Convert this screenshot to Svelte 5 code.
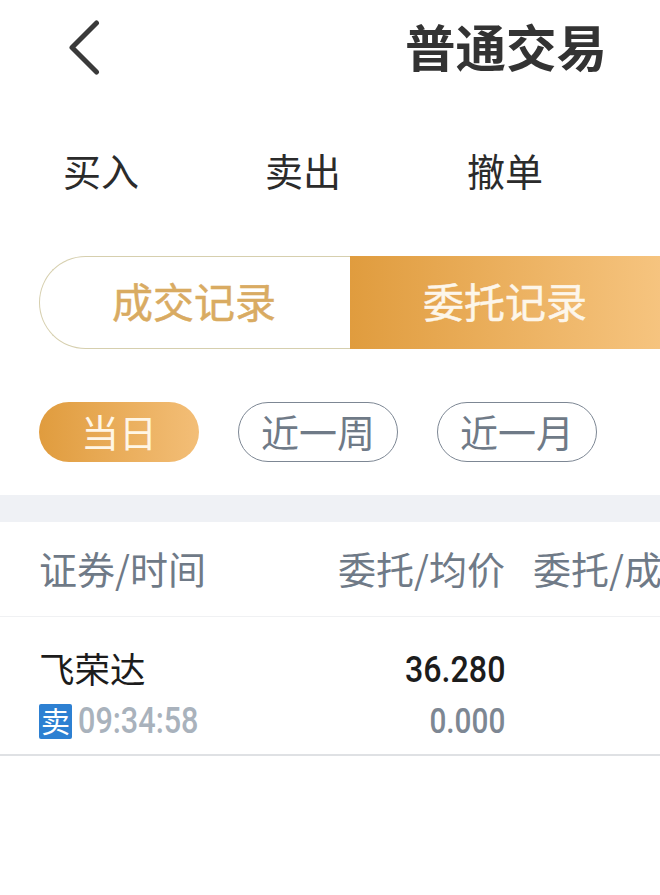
<script>
  const actions = ['买入', '卖出', '撤单'];
  const ranges = ['近一周', '近一月'];
</script>

<div class="page">
  <header class="top">
    <svg class="back" viewBox="0 0 32 56" width="32" height="56" aria-label="返回">
      <path d="M28.5 3 L4 27.5 L28.5 52" fill="none" stroke="#3a3a3a" stroke-width="5" stroke-linecap="round" stroke-linejoin="round" />
    </svg>
    <h1>普通交易</h1>
  </header>

  <nav class="actions">
    {#each actions as a}
      <span>{a}</span>
    {/each}
  </nav>

  <div class="seg">
    <div class="seg-off">成交记录</div>
    <div class="seg-on">委托记录</div>
  </div>

  <div class="pills">
    <span class="pill on">当日</span>
    {#each ranges as r}
      <span class="pill">{r}</span>
    {/each}
  </div>

  <div class="band"></div>

  <div class="thead">
    <span class="c1">证券/时间</span>
    <span class="c2">委托/均价</span>
    <span class="c3">委托/成交</span>
  </div>

  <div class="row">
    <div class="c1 stack">
      <span class="name">飞荣达</span>
      <span class="meta"><b class="tag">卖</b><span class="num time">09:34:58</span></span>
    </div>
    <div class="c2 stack right">
      <span class="num price">36.280</span>
      <span class="num avg">0.000</span>
    </div>
  </div>
</div>

<style>
  :global(body) {
    margin: 0;
    background: #fff;
  }
  .page {
    width: 660px;
    height: 895px;
    overflow: hidden;
    background: #fff;
    font-family: "Noto Sans CJK SC", "Liberation Sans", sans-serif;
  }
  .top {
    height: 97px;
    display: flex;
    align-items: flex-start;
    padding-left: 68px;
    box-sizing: border-box;
  }
  .back {
    margin-top: 20px;
    flex: none;
  }
  h1 {
    margin: 17px 0 0 305px;
    font-size: 50.5px;
    line-height: 56px;
    font-weight: 700;
    color: #333;
    white-space: nowrap;
  }
  .actions {
    height: 159px;
    box-sizing: border-box;
    padding: 51px 0 0 63px;
    display: flex;
    gap: 126px;
    font-size: 38px;
    line-height: 44px;
    color: #2b2b2b;
  }
  .seg {
    margin-left: 39px;
    width: 700px;
    height: 93px;
    display: flex;
    box-sizing: border-box;
  }
  .seg-off, .seg-on {
    display: flex;
    align-items: center;
    font-size: 41px;
    box-sizing: border-box;
    height: 93px;
    padding-bottom: 5px;
    -webkit-text-stroke: 0.5px currentColor;
  }
  .seg-off {
    width: 311px;
    padding-left: 72px;
    color: #d9ab62;
    border: 1px solid #d6cfae;
    border-right: 0;
    border-radius: 46.5px 0 0 46.5px;
  }
  .seg-on {
    width: 389px;
    padding-left: 73px;
    color: #fdf6ea;
    background: linear-gradient(90deg, #e09c3e 0%, #f6c47f 80%);
  }
  .pills {
    margin: 53px 0 0 39px;
    display: flex;
    gap: 39px;
  }
  .pill {
    width: 160px;
    height: 60px;
    box-sizing: border-box;
    display: flex;
    align-items: center;
    justify-content: center;
    border-radius: 30px;
    border: 1px solid #7d8794;
    padding-bottom: 4px;
    color: #6f7a87;
    font-size: 38px;
    white-space: nowrap;
  }
  .pill.on {
    border: 0;
    color: #fff6e6;
    background: linear-gradient(90deg, #e09c3e 0%, #f3be77 100%);
  }
  .band {
    margin-top: 33px;
    height: 27px;
    background: #eff1f5;
  }
  .thead {
    height: 95px;
    box-sizing: border-box;
    border-bottom: 1px solid #f0f1f3;
    display: flex;
    align-items: center;
    padding-bottom: 4px;
    font-size: 38px;
    color: #6f7a87;
    white-space: nowrap;
  }
  .c1 {
    width: 286px;
    margin-left: 39px;
    flex: none;
  }
  .c2 {
    width: 180px;
    text-align: right;
    flex: none;
  }
  .c3 {
    margin-left: 28px;
    flex: none;
  }
  .row {
    height: 139px;
    box-sizing: border-box;
    border-bottom: 2px solid #dfe1e4;
    display: flex;
    padding-top: 29px;
  }
  .stack {
    display: flex;
    flex-direction: column;
  }
  .right {
    align-items: flex-end;
  }
  .name {
    height: 44px;
    font-size: 35.5px;
    line-height: 44px;
    color: #1c1c1c;
  }
  .meta {
    margin-top: 14px;
    height: 35px;
    display: flex;
    align-items: center;
    gap: 6px;
  }
  .tag {
    width: 33px;
    height: 35px;
    border-radius: 2px;
    background: #2d80d2;
    color: #fff;
    font-size: 29px;
    line-height: 33px;
    font-weight: 400;
    text-align: center;
    flex: none;
  }
  .num {
    font-family: Roboto, "Liberation Sans", sans-serif;
    display: block;
    white-space: nowrap;
  }
  .time {
    font-size: 36px;
    line-height: 35px;
    color: #a9b2bc;
    font-weight: 500;
    transform: scaleX(0.85);
    transform-origin: left center;
  }
  .price {
    margin-top: 2px;
    font-size: 37px;
    line-height: 44px;
    font-weight: 500;
    color: #1c1c1c;
    transform: scaleX(0.87);
    transform-origin: right center;
  }
  .avg {
    margin-top: 13px;
    font-size: 35px;
    line-height: 34px;
    font-weight: 500;
    color: #7d8793;
    transform: scaleX(0.85);
    transform-origin: right center;
  }
</style>
